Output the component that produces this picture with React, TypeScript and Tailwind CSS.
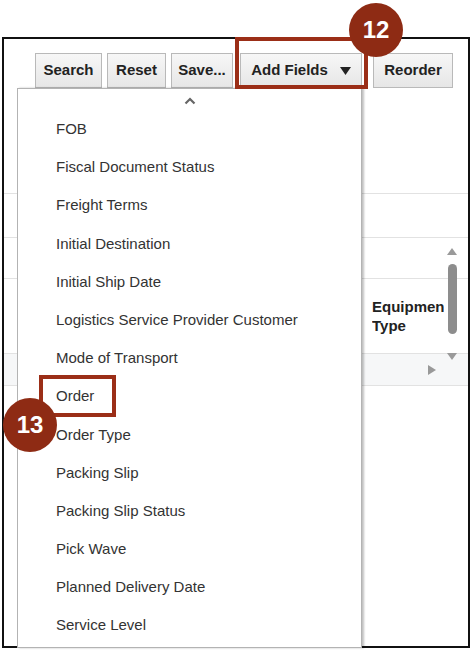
import React from 'react';

const fields = [
  'FOB',
  'Fiscal Document Status',
  'Freight Terms',
  'Initial Destination',
  'Initial Ship Date',
  'Logistics Service Provider Customer',
  'Mode of Transport',
  'Order',
  'Order Type',
  'Packing Slip',
  'Packing Slip Status',
  'Pick Wave',
  'Planned Delivery Date',
  'Service Level',
];

const ToolButton: React.FC<{ label: string; className: string; children?: React.ReactNode }> = ({ label, className, children }) => (
  <button
    className={`${className} h-[35px] flex items-center justify-center gap-3 border border-[#b9b9b9] bg-gradient-to-b from-[#f7f7f7] to-[#e6e6e6] text-[15px] font-bold text-[#222]`}
  >
    {label}
    {children}
  </button>
);

const Badge: React.FC<{ n: string; className: string }> = ({ n, className }) => (
  <div
    className={`absolute w-[54px] h-[54px] rounded-full bg-[#8e2b14] flex items-center justify-center text-white text-[24px] font-bold ${className}`}
  >
    {n}
  </div>
);

export default function App() {
  return (
    <div className="relative w-[472px] h-[650px] bg-white overflow-hidden" style={{ fontFamily: '"Liberation Sans", Arial, sans-serif' }}>
      {/* framed page */}
      <div className="absolute left-[2px] top-[37px] w-[468px] h-[611px] border-2 border-[#111] flex flex-col">
        <div className="flex items-center gap-[5px] pl-[31px] pt-[13px] h-[50px]">
          <ToolButton label="Search" className="w-[67px]" />
          <ToolButton label="Reset" className="w-[59px]" />
          <ToolButton label="Save..." className="w-[62px]" />
          <ToolButton label="Add Fields" className="w-[122px] ml-[2px]">
            <svg width="11" height="8" viewBox="0 0 11 8"><polygon points="0,0 11,0 5.5,8" fill="#222" /></svg>
          </ToolButton>
          <ToolButton label="Reorder" className="w-[80px] ml-[6px]" />
        </div>
        <div className="h-[104px]" />
        <div className="h-[44px] border-t border-[#e2e2e2]" />
        <div className="h-[41px] border-t border-[#e2e2e2]" />
        <div className="h-[75px] border-t border-[#e2e2e2] flex items-center pl-[368px] pr-[24px]">
          <div className="overflow-hidden whitespace-nowrap text-[15px] font-bold leading-[19px] text-[#222] w-[72px]">
            Equipment<br />Type
          </div>
        </div>
        <div className="h-[33px] border-t border-b border-[#e2e2e2] bg-[#f6f7f8] flex items-center justify-end pr-[32px]">
          <svg width="8" height="10" viewBox="0 0 8 10"><polygon points="0,0 8,5 0,10" fill="#999" /></svg>
        </div>
        <div className="absolute left-[13px] top-[274px] w-[2px] h-[10px] bg-[#bbb]" />
        {/* scrollbar */}
        <div className="absolute left-[443px] top-[209px] w-[10px] h-[112px] flex flex-col items-center">
          <svg width="10" height="7" viewBox="0 0 10 7"><polygon points="5,0 10,7 0,7" fill="#9a9a9a" /></svg>
          <div className="mt-[9px] w-[9px] h-[70px] rounded-full bg-[#8d8d8d]" />
          <div className="flex-1" />
          <svg width="10" height="7" viewBox="0 0 10 7"><polygon points="0,0 10,0 5,7" fill="#9a9a9a" /></svg>
        </div>
      </div>

      {/* dropdown menu */}
      <div className="absolute left-[17px] top-[88px] w-[345px] h-[560px] bg-white border border-[#b3b3b3] shadow-[2px_0_2px_rgba(0,0,0,0.25)]">
        <div className="flex justify-center pt-[8px] h-[22px]">
          <svg width="12" height="8" viewBox="0 0 12 8"><polyline points="1.5,6.5 6,2 10.5,6.5" fill="none" stroke="#666" strokeWidth="2.2" /></svg>
        </div>
        <ul className="pl-[38px] pt-[9px]">
          {fields.map((f) => (
            <li key={f} className="h-[38.2px] text-[15px] text-[#333] leading-[18px]">
              {f}
            </li>
          ))}
        </ul>
      </div>

      {/* callouts */}
      <div className="absolute left-[235px] top-[37px] w-[133px] h-[52px] border-4 border-[#9b2e17]" />
      <div className="absolute left-[39px] top-[375px] w-[77px] h-[42px] border-4 border-[#9b2e17]" />
      <Badge n="12" className="left-[349px] top-[3px]" />
      <Badge n="13" className="left-[3px] top-[398px]" />
    </div>
  );
}
